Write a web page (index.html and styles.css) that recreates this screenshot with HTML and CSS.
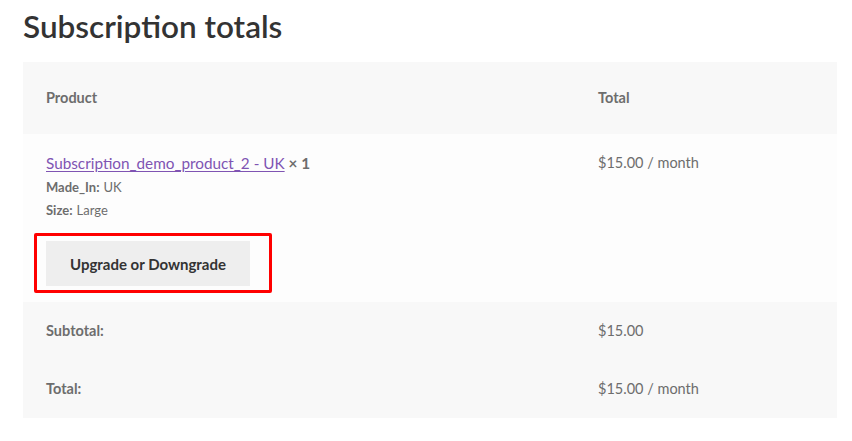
FILE: index.html
```html
<!DOCTYPE html>
<html>
<head>
<meta charset="utf-8">
<link rel="stylesheet" href="styles.css">
</head>
<body>
<div class="page">
  <h2 class="title">Subscription totals</h2>
  <table class="totals">
    <thead>
      <tr><th class="col-product">Product</th><th class="col-total">Total</th></tr>
    </thead>
    <tbody>
      <tr class="item">
        <td class="col-product">
          <div class="name"><a href="#" class="link">Subscription_demo_product_2 - UK</a> <strong class="qty">×&nbsp;1</strong></div>
          <dl class="variation">
            <div class="var-row"><dt>Made_In:</dt><dd>UK</dd></div>
            <div class="var-row"><dt>Size:</dt><dd>Large</dd></div>
          </dl>
          <div class="btn-wrap">
            <button class="btn">Upgrade or Downgrade</button>
            <span class="highlight"></span>
          </div>
        </td>
        <td class="col-total">$15.00 / month</td>
      </tr>
    </tbody>
    <tfoot>
      <tr><th class="col-product">Subtotal:</th><td class="col-total">$15.00</td></tr>
      <tr><th class="col-product">Total:</th><td class="col-total">$15.00 / month</td></tr>
    </tfoot>
  </table>
</div>
</body>
</html>
```
FILE: styles.css
```css
* { box-sizing: border-box; }
html, body { margin: 0; padding: 0; background: #ffffff; }
body {
  font-family: "Lato", "Liberation Sans", sans-serif;
  color: #6d6d6d;
  font-size: 15px;
}
.page { padding: 0 15px 0 23px; }
.title {
  margin: 0;
  padding-top: 7px;
  height: 62px;
  font-size: 31.5px;
  line-height: 38px;
  font-weight: 600;
  color: #333333;
  letter-spacing: 0;
}
.totals {
  width: 814px;
  border-collapse: collapse;
  border-spacing: 0;
}
.totals th, .totals td {
  text-align: left;
  vertical-align: top;
  padding: 16px 23px;
  line-height: 26px;
}
.col-product { width: 552px; }
.totals thead th {
  background: #f8f8f8;
  padding: 23px;
  font-weight: 700;
  font-size: 14.5px;
}
.totals tbody td { background: #fdfdfd; }
.totals tfoot th, .totals tfoot td { background: #f8f8f8; }
.totals tfoot th { font-weight: 700; font-size: 14.5px; }
.totals td.col-total { font-size: 14.5px; }
.name { font-size: 15.3px; }
.link { color: #7f54b3; text-decoration: underline; text-underline-offset: 2px; }
.qty { color: #6d6d6d; font-weight: 700; }
.variation { margin: 0; font-size: 13px; line-height: 23px; }
.var-row { display: flex; gap: 4px; }
.variation dt { font-weight: 700; margin: 0; }
.variation dd { margin: 0; }
.btn-wrap { position: relative; display: inline-block; margin-top: 19px; vertical-align: top; }
.btn {
  display: block;
  width: 204px;
  height: 45px;
  border: 0;
  background: #eeeeee;
  color: #333333;
  font-family: "Lato", "Liberation Sans", sans-serif;
  font-weight: 700;
  font-size: 15px;
  padding: 0;
}
.highlight {
  position: absolute;
  left: -12px;
  top: -8px;
  width: 238px;
  height: 60px;
  border: 3px solid #ff0000;
  border-radius: 2px;
}
```
